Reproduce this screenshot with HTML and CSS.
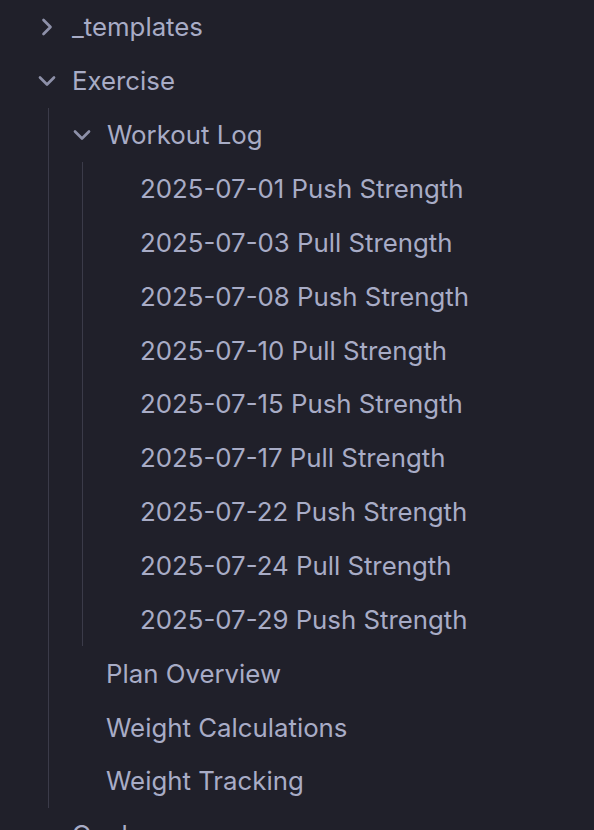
FILE: index.html
```html
<!DOCTYPE html>
<html>
<head>
<meta charset="utf-8">
<link rel="stylesheet" href="styles.css">
</head>
<body>
<div class="tree">
  <div class="row">
    <span class="chev"><svg viewBox="0 0 24 24"><path d="m9 18 6-6-6-6"/></svg></span>
    <span class="label">_templates</span>
  </div>
  <div class="row">
    <span class="chev"><svg viewBox="0 0 24 24"><path d="m6 9 6 6 6-6"/></svg></span>
    <span class="label">Exercise</span>
  </div>
  <div class="children lvl1">
    <div class="row">
      <span class="chev"><svg viewBox="0 0 24 24"><path d="m6 9 6 6 6-6"/></svg></span>
      <span class="label">Workout Log</span>
    </div>
    <div class="children lvl2">
      <div class="row file"><span class="label">2025-07-01 Push Strength</span></div>
      <div class="row file"><span class="label">2025-07-03 Pull Strength</span></div>
      <div class="row file"><span class="label">2025-07-08 Push Strength</span></div>
      <div class="row file"><span class="label">2025-07-10 Pull Strength</span></div>
      <div class="row file"><span class="label">2025-07-15 Push Strength</span></div>
      <div class="row file"><span class="label">2025-07-17 Pull Strength</span></div>
      <div class="row file"><span class="label">2025-07-22 Push Strength</span></div>
      <div class="row file"><span class="label">2025-07-24 Pull Strength</span></div>
      <div class="row file"><span class="label">2025-07-29 Push Strength</span></div>
    </div>
    <div class="row file"><span class="label">Plan Overview</span></div>
    <div class="row file"><span class="label">Weight Calculations</span></div>
    <div class="row file"><span class="label">Weight Tracking</span></div>
  </div>
  <div class="row">
    <span class="chev"><svg viewBox="0 0 24 24"><path d="m6 9 6 6 6-6"/></svg></span>
    <span class="label">Goals</span>
  </div>
</div>
</body>
</html>
```
FILE: styles.css
```css
html, body {
  margin: 0;
  padding: 0;
  background: #20202a;
  height: 100%;
  overflow: hidden;
}
.tree {
  padding-left: 14px;
  font-family: Inter, "Noto Sans", sans-serif;
  font-size: 25.8px;
  color: #a8acc6;
}
.row {
  display: flex;
  align-items: center;
  height: 53.86px;
  padding-left: 19px;
  white-space: nowrap;
}
.row.file {
  padding-left: 57px;
}
.chev {
  width: 28px;
  height: 28px;
  display: flex;
  align-items: center;
  justify-content: center;
  margin-right: 11px;
  flex: none;
}
.chev svg {
  width: 32px;
  height: 32px;
  fill: none;
  stroke: #8d90a9;
  stroke-width: 2.3;
  stroke-linecap: round;
  stroke-linejoin: round;
}
.children {
  border-left: 1px solid #3b3b49;
}
.lvl1 {
  margin-left: 34px;
}
.lvl2 {
  margin-left: 33px;
}
```
